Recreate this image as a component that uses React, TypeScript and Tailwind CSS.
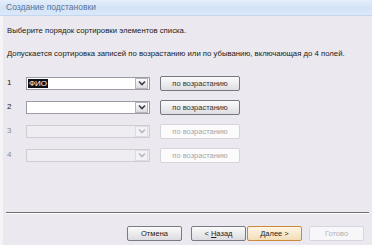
import React from 'react';

const font = { fontFamily: '"Liberation Sans", Arial, sans-serif' };

const Chevron = ({ disabled }: { disabled?: boolean }) => (
  <svg width="8" height="6" viewBox="0 0 8 6">
    <path
      d="M1 1.5 L4 4.5 L7 1.5"
      fill="none"
      stroke={disabled ? '#b8b8c0' : '#3c3c44'}
      strokeWidth="1.6"
    />
  </svg>
);

interface SortRowProps {
  n: number;
  value?: string;
  disabled?: boolean;
}

const SortRow: React.FC<SortRowProps> = ({ n, value, disabled }) => (
  <div className="flex items-center h-[24px]">
    <span className={`w-[23px] pl-[4px] text-[8px] ${disabled ? 'text-[#8a8a90]' : 'text-[#222]'}`}>{n}</span>
    {/* комбобокс */}
    <div
      className={`flex items-center w-[124px] h-[13px] border ${
        disabled ? 'border-[#cfcdd4] bg-[#efedf2]' : 'border-[#9c9ca6] bg-white'
      }`}
    >
      <div className="flex-1 flex items-center pl-[1px]">
        {value && (
          <span className="bg-[#101018] text-white text-[8px] leading-[9px] px-[1px]">{value}</span>
        )}
      </div>
      <div
        className={`w-[13px] h-[11px] mr-[1px] flex items-center justify-center border ${
          disabled
            ? 'border-[#dddbe2] bg-[#f3f2f5]'
            : 'border-[#b4b4bc] bg-gradient-to-b from-[#fdfdfd] to-[#dcdce2]'
        }`}
      >
        <Chevron disabled={disabled} />
      </div>
    </div>
    <div
      className={`ml-[10px] w-[80px] h-[15px] flex items-center justify-center text-[7.5px] rounded-[2px] border ${
        disabled
          ? 'border-[#d6d4da] bg-[#fbfbfc] text-[#a6a6ac]'
          : 'border-[#77777f] bg-gradient-to-b from-[#fbfbfb] to-[#dedde2] text-[#333]'
      }`}
    >
      по возрастанию
    </div>
  </div>
);

const Btn: React.FC<{ children: React.ReactNode; variant?: 'default' | 'active' | 'disabled'; className?: string }> = ({
  children,
  variant = 'default',
  className = '',
}) => {
  const cls =
    variant === 'active'
      ? 'border-[#c98a3c] bg-gradient-to-b from-[#fff6e4] to-[#f2ddb8] text-[#222]'
      : variant === 'disabled'
      ? 'border-[#d8d6dc] bg-[#f7f7f9] text-[#b0b0b6]'
      : 'border-[#7a7a82] bg-gradient-to-b from-[#fbfbfb] to-[#dcdbe0] text-[#222]';
  return (
    <div
      className={`w-[55px] h-[15px] flex items-center justify-center text-[7.5px] rounded-[2px] border ${cls} ${className}`}
    >
      {children}
    </div>
  );
};

export default function App() {
  return (
    <div className="w-[372px] h-[245px] bg-[#ebe9ef] flex flex-col overflow-hidden" style={font}>
      {/* заголовок */}
      <div className="h-[16px] flex items-center px-[6px] bg-gradient-to-b from-[#e4eefb] via-[#d3e3f7] to-[#dbe8fa] border-b border-[#c4d5ee]">
        <span className="text-[8.5px] text-[#5a7396]">Создание подстановки</span>
      </div>

      <div className="flex-1 flex flex-col border-l-[3px] border-[#f4f3f6]">
        <div className="pl-[4px] pt-[9px] text-[7.75px] text-[#1a1a1a]">
          Выберите порядок сортировки элементов списка.
        </div>
        <div className="pl-[4px] pt-[11px] text-[7.75px] text-[#1a1a1a]">
          Допускается сортировка записей по возрастанию или по убыванию, включающая до 4 полей.
        </div>

        <div className="pt-[12px] flex flex-col">
          <SortRow n={1} value="ФИО" />
          <SortRow n={2} />
          <SortRow n={3} disabled />
          <SortRow n={4} disabled />
        </div>

        <div className="flex-1" />

        {/* разделитель */}
        <div className="mx-[3px] mb-[1px] h-[2px] border-t border-[#6e6e74] border-b border-b-white" />

        <div className="h-[30px] flex items-center justify-end pr-[8px] pt-[7px]">
          <Btn className="mr-[9px]">Отмена</Btn>
          <Btn>
            &lt; <span className="underline ml-[2px]">Н</span>азад
          </Btn>
          <Btn variant="active" className="ml-[1px]">
            <span className="underline">Д</span>алее &gt;
          </Btn>
          <Btn variant="disabled" className="ml-[7px]">
            Готово
          </Btn>
        </div>
      </div>
    </div>
  );
}
